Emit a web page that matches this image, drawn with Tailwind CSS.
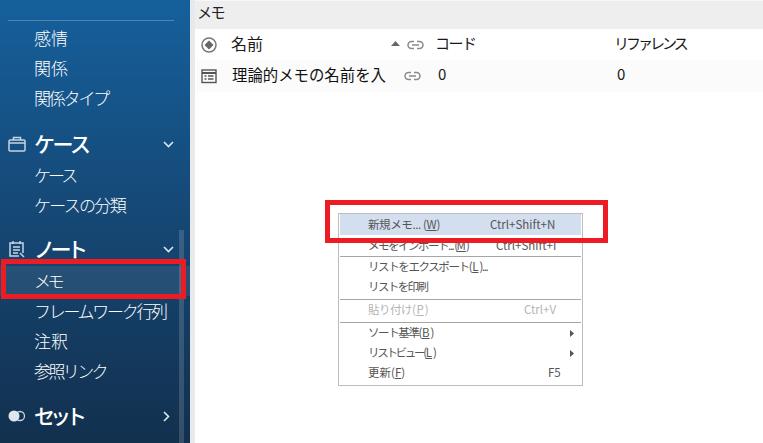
<!doctype html>
<html lang="ja">
  <head>
    <meta charset="UTF-8" />
    <title>メモ</title>
    <script src="https://cdn.jsdelivr.net/npm/@tailwindcss/browser@4"></script>
  </head>
  <body class="w-[763px] h-[443px] overflow-hidden bg-white font-['Noto_Sans_CJK_JP','Noto_Sans',sans-serif]">
    <div class="relative flex w-[763px] h-[443px]">

      <!-- sidebar -->
      <aside class="relative w-[190px] h-full shrink-0 bg-gradient-to-b from-[#15609c] to-[#12304e] text-white overflow-hidden">
        <div class="h-[20px]"></div>
        <div class="mx-[8px] w-[166px] h-px bg-white/25"></div>
        <div class="h-[3px]"></div>
        <a class="flex items-center h-[30px] pl-[34px] pb-[2px] text-[17px] font-light">感情</a>
        <a class="flex items-center h-[30px] pl-[34px] pb-[2px] text-[17px] font-light">関係</a>
        <a class="flex items-center h-[30px] pl-[34px] pb-[2px] text-[17px] font-light tracking-[-2.200px]">関係タイプ</a>

        <div class="flex items-center h-[34px] mt-[13px] pl-[8px]">
          <svg class="w-[18px] h-[18px] shrink-0" viewBox="0 0 18 18" fill="none" stroke="#c5d4e2" stroke-width="1.5"><rect x="1" y="5" width="16" height="11" rx="1"/><path d="M5.500 5V2.500h7V5M1 8h16"/></svg>
          <span class="ml-[8px] text-[21px] font-medium tracking-[-2.500px]">ケース</span>
          <svg class="ml-auto mr-[16px] w-[11px] h-[7px]" viewBox="0 0 11 7" fill="none" stroke="#dfe7ef" stroke-width="1.6"><path d="M1 1l4.500 4.500L10 1"/></svg>
        </div>
        <a class="flex items-center h-[30px] -mt-[1px] pl-[34px] pb-[1px] text-[17px] font-light tracking-[-3px]">ケース</a>
        <a class="flex items-center h-[30px] pl-[34px] pb-[1px] text-[17px] font-light tracking-[-1.700px]">ケースの分類</a>

        <div class="flex items-center h-[34px] mt-[12px] pl-[8px]">
          <svg class="w-[18px] h-[18px] shrink-0" viewBox="0 0 18 18" fill="none" stroke="#c5d4e2" stroke-width="1.5"><path d="M15 13V3H2v13h9M5 1v3M12 1v3M5 7h7M5 10h7M5 13h5M12 13l4 4"/></svg>
          <span class="ml-[8px] text-[21px] font-medium tracking-[-4.500px]">ノート</span>
          <svg class="ml-auto mr-[16px] w-[11px] h-[7px]" viewBox="0 0 11 7" fill="none" stroke="#dfe7ef" stroke-width="1.6"><path d="M1 1l4.500 4.500L10 1"/></svg>
        </div>
        <a class="flex items-center h-[30px] pl-[34px] pb-[1px] text-[17px] font-light bg-white/[.08] tracking-[-3.500px]">メモ</a>
        <a class="flex items-center h-[30px] pl-[34px] pb-[1px] text-[17px] font-light tracking-[-2.300px]">フレームワーク行列</a>
        <a class="flex items-center h-[30px] pl-[34px] pb-[1px] text-[17px] font-light">注釈</a>
        <a class="flex items-center h-[30px] pl-[34px] pb-[1px] text-[17px] font-light tracking-[-2.600px]">参照リンク</a>

        <div class="flex items-center h-[34px] mt-[13px] pl-[8px]">
          <svg class="w-[18px] h-[12px] shrink-0" viewBox="0 0 18 12"><circle cx="12" cy="6" r="4.500" fill="none" stroke="#c5d4e2" stroke-width="1.3"/><circle cx="6" cy="6" r="5.500" fill="#dfe6ee"/></svg>
          <span class="ml-[8px] text-[21px] font-medium tracking-[-5px]">セット</span>
          <svg class="ml-auto mr-[20px] w-[7px] h-[11px]" viewBox="0 0 7 11" fill="none" stroke="#dfe7ef" stroke-width="1.6"><path d="M1 1l4.500 4.500L1 10"/></svg>
        </div>

        <!-- scrollbar -->
        <div class="absolute left-[179px] top-[230px] w-[5px] h-[213px] bg-white/15"></div>
      </aside>

      <div class="w-[5px] h-full shrink-0 bg-[#e8e9ec]"></div>

      <!-- main -->
      <main class="flex-1 flex flex-col min-w-0 text-[#1a1a1a]">
        <div class="h-[29px] flex items-center pl-[2px] pb-[5px] bg-[#eeeeee] border-t border-[#f6f6f6] text-[15px] tracking-[-1.500px] text-[#222]">メモ</div>

        <div class="flex items-center h-[31px] text-[15px]">
          <svg class="ml-[6px] w-[16px] h-[16px] shrink-0" viewBox="0 0 16 16"><circle cx="8" cy="8" r="7" fill="none" stroke="#777" stroke-width="1.5"/><path d="M8 3.500L12.500 8 8 12.500 3.500 8z" fill="#666"/></svg>
          <span class="ml-[14px] w-[160px] pb-[3px] text-[16px]">名前</span>
          <svg class="mb-[2px] w-[9px] h-[5px] shrink-0" viewBox="0 0 9 5"><path d="M4.500 0L9 5H0z" fill="#666"/></svg>
          <svg class="ml-[7px] w-[17px] h-[10px] shrink-0" viewBox="0 0 17 10" fill="none" stroke="#8a8a8a" stroke-width="1.5"><path d="M7 1.500H4.500a3.500 3.500 0 000 7H7M10 1.500h2.500a3.500 3.500 0 010 7H10M5 5h7"/></svg>
          <span class="ml-[11px] w-[179px] pb-[3px] tracking-[-1.500px]">コード</span>
          <span class="pb-[3px] tracking-[-3px]">リファレンス</span>
        </div>

        <div class="flex items-center h-[32px] ml-[2px] bg-[#fbfbfb] text-[15px]">
          <svg class="ml-[4px] w-[16px] h-[16px] shrink-0" viewBox="0 0 16 16" fill="none" stroke="#555" stroke-width="1.4"><rect x="1" y="2" width="14" height="12.500"/><path d="M1 5h14" stroke-width="2"/><path d="M3.500 8h2M7 8h5.500M3.500 11h2M7 11h5.500"/></svg>
          <span class="ml-[15px] w-[154px] pb-[3px] whitespace-nowrap overflow-hidden text-[15.400px] text-[#111]">理論的メモの名前を入</span>
          <svg class="ml-[18px] w-[17px] h-[10px] shrink-0" viewBox="0 0 17 10" fill="none" stroke="#8a8a8a" stroke-width="1.5"><path d="M7 1.500H4.500a3.500 3.500 0 000 7H7M10 1.500h2.500a3.500 3.500 0 010 7H10M5 5h7"/></svg>
          <span class="ml-[17px] w-[179px] pb-[3px]">0</span>
          <span class="pb-[3px]">0</span>
        </div>
      </main>

      <!-- context menu -->
      <div class="absolute left-[338px] top-[213px] w-[245px] h-[173px] bg-white border border-[#bdbdbd] px-px text-[11.500px] text-[#555]">
        <div class="flex items-center h-[21px] pl-[28px] bg-[#d3deef]"><span class="w-[122px] tracking-[-.4px]">新規メモ... (<u class="tracking-normal">W</u>)</span><span>Ctrl+Shift+N</span></div>
        <div class="flex items-center h-[21px] pl-[28px]"><span class="w-[128px] whitespace-nowrap tracking-[-1.500px]">メモをインポート... (<u class="tracking-normal">M</u>)</span><span>Ctrl+Shift+I</span></div>
        <div class="h-px bg-[#a6a6a6]"></div>
        <div class="flex items-center h-[20px] pl-[28px] tracking-[-1.400px]"><span>リストをエクスポート(<u class="tracking-normal mx-px">L</u>)...</span></div>
        <div class="flex items-center h-[20px] pl-[28px] tracking-[-1.600px]">リストを印刷</div>
        <div class="h-px bg-[#a6a6a6] mt-[2px]"></div>
        <div class="flex items-center h-[20px] pl-[28px] text-[#b4b4b4]"><span class="w-[156px] tracking-[-.5px]">貼り付け(<u class="tracking-normal mx-px">P</u>)</span><span>Ctrl+V</span></div>
        <div class="h-px bg-[#a6a6a6] mt-[2px]"></div>
        <div class="flex items-center justify-between h-[20px] pl-[28px] pr-[7px]"><span class="tracking-[-1.400px]">ソート基準(<u class="tracking-normal mx-px">B</u>)</span><svg class="w-[4px] h-[7px]" viewBox="0 0 4 7"><path d="M0 0l4 3.500L0 7z" fill="#555"/></svg></div>
        <div class="flex items-center justify-between h-[20px] pl-[28px] pr-[7px]"><span class="tracking-[-2.300px]">リストビュー(<u class="tracking-normal mx-px">L</u>)</span><svg class="w-[4px] h-[7px]" viewBox="0 0 4 7"><path d="M0 0l4 3.500L0 7z" fill="#555"/></svg></div>
        <div class="flex items-center h-[20px] pl-[28px]"><span class="w-[180px]">更新(<u>F</u>)</span><span>F5</span></div>
      </div>

      <!-- red highlight boxes -->
      <div class="absolute left-[1px] top-[259px] w-[185px] h-[40px] border-[5px] border-[#ed1c24]"></div>
      <div class="absolute left-[325px] top-[200px] w-[283px] h-[43px] border-[5px] border-[#ed1c24]"></div>
    </div>
  </body>
</html>
